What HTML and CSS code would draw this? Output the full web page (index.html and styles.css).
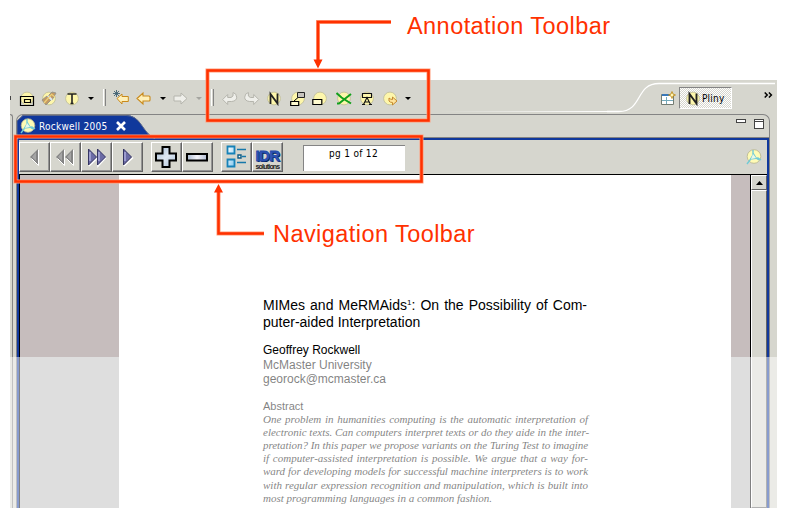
FILE: index.html
```
<!DOCTYPE html>
<html lang="en">
<head>
<meta charset="utf-8">
<title>Pliny toolbars</title>
<link rel="stylesheet" href="styles.css">
</head>
<body>
<svg class="defs" width="0" height="0" aria-hidden="true">
  <defs>
    <linearGradient id="steel" x1="0" y1="0" x2="1" y2="1"><stop offset="0" stop-color="#9fb7d2"/><stop offset=".5" stop-color="#dfe8f2"/><stop offset="1" stop-color="#a9bfd8"/></linearGradient>
    <linearGradient id="bar" x1="0" y1="0" x2="1" y2="0"><stop offset="0" stop-color="#a9b9d0"/><stop offset=".5" stop-color="#f4f4fa"/><stop offset="1" stop-color="#b4bfd4"/></linearGradient>
    <linearGradient id="tile" x1="0" y1="0" x2="1" y2="1"><stop offset="0" stop-color="#fff"/><stop offset="1" stop-color="#84c8ee"/></linearGradient>
    <symbol id="disc" viewBox="0 0 16 16"><circle cx="8" cy="8.500" r="6.400" fill="#fdf6ab" stroke="#bdbb98" stroke-width=".8"/></symbol>
    <symbol id="logo" viewBox="0 0 16 16"><circle cx="8" cy="7.500" r="6.800" fill="#fffbb5" stroke="#b8b58e" stroke-width=".8"/><path d="M7 1v5L4 11 1 15M4 10l8-1 3 2M7 4l3 5 3 2" fill="none" stroke="#72cbd6" stroke-width="1.400"/><path d="M7 5l-2 5 5-1z" fill="#e8f8e8"/></symbol>
  </defs>
</svg>
<div class="stage">
  <main class="window">
    <div class="toolbar">
      <i class="edge"></i>
      <svg class="ic g1" viewBox="0 0 16 16"><use href="#disc"/><path d="M1.500 6.500h13v9h-13zM5.500 9.500h6v3h-6z" fill="none" stroke="#000" stroke-width="1.200"/></svg>
      <svg class="ic g2" viewBox="0 0 16 16"><use href="#disc"/><path d="M1 10l5-4 4 4-5 5zM7 6l4-4 4 1-4 7z" fill="#c49a62" stroke="#98968d"/><path d="M7 6l4 4" stroke="#dceaf5" stroke-width="2"/><path d="M3 13l7-8M10 4l4 3" stroke="#eed179" stroke-width="1.200"/></svg>
      <svg class="ic g3" viewBox="0 0 16 16"><use href="#disc"/><path d="M3.500 4h9M8 4v10M6.500 13.500h3" stroke="#222" stroke-width="1.600"/></svg>
      <i class="drop g4"></i><i class="sep g5"></i>
      <svg class="ic g6" viewBox="0 0 16 16"><path d="M4 8.500l5-4.500v2.500h6.300v5H9V14z" fill="#fff0b8" stroke="#c98a1c"/><path d="M3.500 0v7M0 3.500h7M1 1l5 5M6 1L1 6" stroke="#3f6173" stroke-width=".9"/></svg>
      <svg class="ic g7" viewBox="0 0 16 16"><path d="M1 8.500l6-5.500v3h6q1 0 1 1v3q0 1-1 1H7v3z" fill="#fff0b8" stroke="#c98a1c" stroke-width="1.100"/></svg>
      <i class="drop g8"></i>
      <svg class="ic g9" viewBox="0 0 16 16"><path d="M14 8.500L8 3v3H1v5h7v3z" fill="#efefea" stroke="#b5b5ad"/></svg>
      <i class="drop off g10"></i><i class="sep g11"></i>
      <svg class="ic g12" viewBox="0 0 16 16"><path d="M.7 9.500l5-5v3h3.300q3-.5 2-5 3.700 1 3.700 4.700 0 3.800-5 4.300h-4v3z" fill="#efefea" stroke="#b5b5ad"/></svg>
      <svg class="ic g13" viewBox="0 0 16 16"><path d="M14.700 9.500l-5-5v3H6.400q-3-.5-2-5Q.7 3.500.7 7.200q0 3.800 5 4.300h4v3z" fill="#efefea" stroke="#b5b5ad"/></svg>
      <svg class="ic g14" viewBox="0 0 16 16"><use href="#disc"/><path d="M4.500 14V4l7 9.500V3.500" fill="none" stroke="#222" stroke-width="1.800"/></svg>
      <svg class="ic g15" viewBox="0 0 16 16"><use href="#disc"/><path d="M4 11l4-3.500" stroke="#000"/><path d="M7.500 2.500h7v5h-7z" fill="#c6c3bd" stroke="#222"/><path d="M.7 11.500h8v4h-8z" fill="#fffbd0" stroke="#000" stroke-width="1.200"/></svg>
      <svg class="ic g16" viewBox="0 0 16 16"><use href="#disc"/><path d="M.8 9.500h9v5h-9z" fill="#fffbd0" stroke="#000" stroke-width="1.200"/></svg>
      <svg class="ic g17" viewBox="0 0 16 16"><use href="#disc"/><path d="M.5 3l5 4.500 9.500 6M1 13.500h2L15 4" fill="none" stroke="#12a01b" stroke-width="2"/></svg>
      <svg class="ic g18" viewBox="0 0 16 16"><use href="#disc"/><path d="M3.500 3.500h9v4h-9zM3 14.500h3M10 14.500h3M4.500 14.500L8 7.500l3.500 7M5.500 12h5" fill="none" stroke="#111" stroke-width="1.100"/></svg>
      <svg class="ic g19" viewBox="0 0 16 16"><use href="#disc"/><path d="M7 8v3q1 1.500 3.500 1.500V15l4.500-4-4.500-4v2.500Q8.500 9.500 7 8z" fill="#ffe39a" stroke="#c58a31"/></svg>
      <i class="drop g20"></i>
      <div class="perspective">
        <svg class="swoop" viewBox="0 0 170 34"><path d="M0 31.500H12C36 31.500 28 3.500 52 3.500H168" fill="none" stroke="#fff" stroke-width="1.300"/></svg>
        <div class="switcher">
          <svg class="open" viewBox="0 0 15 15"><path d="M.5 3.500h12v10H.5z" fill="#fff" stroke="#737c72"/><path d="M1 3h8v2H1z" fill="#3978b8"/><path d="M1 9.500h11M5.500 6v7" stroke="#74aabb"/><path d="M11 .5l1 2.500 2.500 1L12 5l-1 2.500L10 5 7.500 4 10 3z" fill="#fff6b3" stroke="#bd8814" stroke-width=".8"/></svg>
          <button class="pliny"><svg viewBox="0 0 16 16"><use href="#disc"/><path d="M4.500 14V4l7 9.500V3.500" fill="none" stroke="#222" stroke-width="1.900"/></svg><span>Pliny</span></button>
          <svg class="more" viewBox="0 0 9 6"><path d="M.7.500L3.200 3 .7 5.500M4.900.500L7.400 3 4.900 5.500" fill="none" stroke="#000" stroke-width="1.500"/></svg>
        </div>
      </div>
    </div>
    <div class="body">
      <div class="neighbor"></div>
      <section class="editor">
        <header class="tabs">
          <div class="tab">
            <svg class="shape" viewBox="0 0 138 24"><path d="M0 24V6L6 0H109C123 0 125 15 134 21L138 24z" fill="#10389c"/><path d="M0 24V6L6 .5H109C123 .5 125 15 134 21L138 24" fill="none" stroke="#5a6688"/></svg>
            <svg class="pic" viewBox="0 0 16 16"><use href="#logo"/></svg>
            <span class="name">Rockwell 2005</span>
            <svg class="close" viewBox="0 0 10 10"><path d="M1 1l8 8M9 1L1 9" stroke="#fff" stroke-width="2.600"/></svg>
          </div>
          <div class="controls"><i class="min"></i><i class="max"></i></div>
        </header>
        <div class="pane">
          <nav class="nav">
            <div class="group">
              <button><svg viewBox="0 0 28 28"><path d="M18 6v16l-8-8z" fill="#848484"/><path d="M18.500 7v15.500l-7-7" fill="none" stroke="#fff"/><path d="M16 9v9l-4-4z" fill="#a5a5a5"/></svg></button>
              <button><svg viewBox="0 0 28 28"><path d="M13 6v16l-8-8zM22 6v16l-8-8z" fill="#848484"/><path d="M13.500 7v15.500l-7-7M22.500 7v15.500l-7-7" fill="none" stroke="#fff"/><path d="M11 9v9l-4-4zM20 9v9l-4-4z" fill="#a5a5a5"/></svg></button>
              <button><svg viewBox="0 0 28 28"><path d="M7 23l9-8.500 0 8.500 8-8.500" fill="none" stroke="#fff" stroke-width="1.500"/><path d="M6.500 6v16l8-8zM15.500 6v16l8-8z" fill="#6b6ba5" stroke="#29295a" stroke-width=".9"/><path d="M8 9v9M17 9v9" stroke="#9c9cce" stroke-width="2"/></svg></button>
              <button><svg viewBox="0 0 28 28"><path d="M11 23l9-8.500" stroke="#fff" stroke-width="1.500"/><path d="M10.500 6v16l8-8z" fill="#6b6ba5" stroke="#29295a" stroke-width=".9"/><path d="M12 9v9" stroke="#9c9cce" stroke-width="2"/></svg></button>
            </div>
            <div class="group second">
              <button><svg viewBox="0 0 28 28"><path d="M10.500 4h7v6.500H24v7h-6.500V24h-7v-6.500H4v-7h6.500z" fill="url(#steel)" stroke="#000" stroke-width="2"/></svg></button>
              <button><svg viewBox="0 0 28 28"><path d="M4 11h20v6.500H4z" fill="url(#bar)" stroke="#000" stroke-width="2"/></svg></button>
            </div>
            <div class="group third">
              <button><svg viewBox="0 0 28 28"><path d="M5.500 3.500h7v7h-7zM5.500 16.500h7v7h-7z" fill="url(#tile)" stroke="#1682b8" stroke-width="1.800"/><path d="M15 6.500h9M15 19.500h9M20 13.500h4" stroke="#1678aa" stroke-width="1.500"/><path d="M16 12h3v3h-3z" fill="#fff" stroke="#0c5b85" stroke-width="1.400"/></svg></button>
              <button class="idr"><b>IDR</b><small>solutions</small></button>
            </div>
            <div class="page-no">pg 1 of 12</div>
            <svg class="brand" viewBox="0 0 16 16"><use href="#logo"/></svg>
          </nav>
          <div class="viewer">
            <article class="page">
              <h1><span class="full">MIMes and MeRMAids<sup>1</sup>: On the Possibility of Com-</span><span class="short">puter-aided Interpretation</span></h1>
              <address><span>Geoffrey Rockwell</span><span>McMaster University</span><span>georock@mcmaster.ca</span></address>
              <h2>Abstract</h2>
              <p><span>One problem in humanities computing is the automatic interpretation of</span><span>electronic texts. Can computers interpret texts or do they aide in the inter-</span><span class="tight">pretation? In this paper we propose variants on the Turing Test to imagine</span><span>if computer-assisted interpretation is possible. We argue that a way for-</span><span class="tight">ward for developing models for successful machine interpreters is to work</span><span>with regular expression recognition and manipulation, which is built into</span><span class="last">most programming languages in a common fashion.</span></p>
            </article>
            <div class="scroll"><div class="up"><svg viewBox="0 0 7 4"><path d="M3.500 0L7 4H0z"/></svg></div><div class="thumb"></div></div>
          </div>
        </div>
      </section>
    </div>
    <div class="fade"></div>
  </main>
  <svg class="marks" viewBox="0 0 786 518">
    <g fill="none" stroke="#ff9c7b" stroke-width="4"><path d="M207.500 70.500h221v50h-221zM15.500 136.500h406v45h-406zM391 22H318V62M264 233.500H218.500V190"/></g>
    <g fill="none" stroke="#ff3100" stroke-width="2.500"><path d="M207.500 70.500h221v50h-221zM15.500 136.500h406v45h-406zM391 22H318V62M264 233.500H218.500V190"/></g>
    <path d="M313.500 59.500h9L318 68.500zM214 192.500h9L218.500 184z" fill="#ff3100"/>
  </svg>
  <div class="label annotation">Annotation Toolbar</div>
  <div class="label navigation">Navigation Toolbar</div>
</div>
</body>
</html>
```
FILE: styles.css
```
* { box-sizing: border-box; }
body { margin: 0; background: #fff; font-family: "Liberation Sans", Arial, sans-serif; }
.defs { position: absolute; }
svg { display: block; flex: none; }
.stage { position: relative; width: 786px; height: 518px; padding: 80px 0 0 10px; overflow: hidden; }
.window { position: relative; width: 767px; height: 428px; background: #d6d6ce; display: flex; flex-direction: column; overflow: hidden; }
.toolbar { height: 34px; flex: none; display: flex; padding-top: 10px; }
.ic { width: 16px; height: 16px; }
.edge { width: 1px; height: 4px; background: #444; margin-top: 6px; }
.drop { width: 6px; height: 3px; margin-top: 7px; background: #000; clip-path: polygon(0 0, 100% 0, 50% 100%); flex: none; }
.drop.off { background: #a5a5a0; }
.sep { width: 3px; height: 17px; margin-top: -1px; flex: none; border-left: 1px solid #fff; border-right: 1px solid #848484; background: #d6d6ce; }
.g1 { margin-left: 8px; }
.g2 { margin-left: 6px; }
.g3 { margin-left: 7px; }
.g4 { margin-left: 8px; }
.g5 { margin-left: 9px; }
.g6 { margin-left: 7px; }
.g7 { margin-left: 7px; }
.g8 { margin-left: 8px; }
.g9 { margin-left: 7px; }
.g10 { margin-left: 7px; }
.g11 { margin-left: 9px; }
.g12 { margin-left: 8px; }
.g13 { margin-left: 6px; }
.g14 { margin-left: 6px; }
.g15 { margin-left: 8px; }
.g16 { margin-left: 6px; }
.g17 { margin-left: 8px; }
.g18 { margin-left: 7px; }
.g19 { margin-left: 7px; }
.g20 { margin-left: 7px; }
.perspective { position: relative; width: 170px; height: 34px; margin: -10px 0 0 auto; flex: none; }
.perspective::before { content: ""; position: absolute; left: -166px; top: 31px; width: 167px; height: 1px; background: linear-gradient(90deg, #d6d6ce, #fff); }
.swoop { position: absolute; left: 0; top: 0; width: 170px; height: 34px; }
.switcher { position: relative; display: flex; padding: 7px 4px 0 54px; align-items: flex-start; }
.open { width: 15px; height: 15px; margin-top: 4px; }
.pliny { width: 53px; height: 22px; margin-left: 3px; padding: 0 0 0 5px; display: flex; align-items: center; border: 1px solid; border-color: #848484 #fff #fff #848484; background: repeating-conic-gradient(#d6d6ce 0 25%, #fff 0 50%) 0 0 / 2px 2px; }
.pliny svg { width: 16px; height: 16px; }
.pliny span { font: 10px/14px "DejaVu Sans Condensed", "DejaVu Sans", sans-serif; letter-spacing: .2px; color: #000; margin: 2px 0 0 1px; }
.more { width: 9px; height: 6px; margin: 5px 0 0 auto; }
.body { flex: 1; display: flex; min-height: 0; }
.neighbor { width: 3px; border-top: 1px solid #848484; border-right: 1px solid #848484; border-top-right-radius: 3px; }
.editor { width: 754px; margin-left: 3px; border: 1px solid #848484; border-bottom: 0; border-radius: 7px 7px 0 0; display: flex; flex-direction: column; }
.tabs { height: 23px; flex: none; display: flex; justify-content: space-between; border-bottom: 1px solid #848484; }
.tab { position: relative; width: 138px; height: 24px; display: flex; color: #fff; font: 10px/14px "DejaVu Sans Condensed", "DejaVu Sans", sans-serif; letter-spacing: .25px; }
.shape { position: absolute; left: 0; top: 0; width: 138px; height: 24px; }
.pic { position: relative; width: 16px; height: 16px; margin: 3px 0 0 3px; }
.name { position: relative; width: 70px; margin: 5px 0 0 3px; white-space: nowrap; }
.close { position: relative; width: 10px; height: 10px; margin: 6px 0 0 7px; }
.controls { display: flex; gap: 8px; padding: 4px 5px 0 0; }
.min { width: 10px; height: 4px; border: 1px solid #444; background: #fff; }
.max { width: 10px; height: 10px; border: 1px solid #444; background: linear-gradient(#fff 1px, #444 1px 2px, #fff 2px); }
.pane { flex: 1; min-height: 0; border: 2px solid #10389c; border-bottom: 0; display: flex; flex-direction: column; }
.nav { height: 34px; flex: none; display: flex; padding: 2px 5px 0 0; }
.group { display: flex; }
.group button { width: 31px; height: 30px; padding: 0; border: 1px solid; border-color: #fff #636363 #636363 #fff; box-shadow: inset -1px -1px #949494; background: #d6d6ce; }
.group svg { width: 28px; height: 28px; }
.second, .third { margin-left: 8px; }
.group .idr { display: flex; flex-direction: column; align-items: center; justify-content: flex-start; }
.idr b { font: 900 15px/15px "Liberation Sans", sans-serif; color: #3157b5; text-shadow: 1px 1px #001a52; padding-top: 5px; letter-spacing: -.6px; -webkit-text-stroke: .8px #2148a8; }
.idr small { font: bold 7px/7px "Liberation Sans", sans-serif; color: #222; letter-spacing: -.8px; }
.page-no { width: 102px; height: 26px; margin: 3px 0 0 20px; border-top: 1px solid #848484; border-left: 1px solid #848484; background: #fff; font: 10px/15px "DejaVu Sans Condensed", "DejaVu Sans", sans-serif; letter-spacing: .3px; text-align: center; padding-right: 2px; }
.brand { width: 16px; height: 16px; margin: 7px 0 0 auto; }
.viewer { flex: 1; min-height: 0; display: flex; border: 1px solid #000; border-width: 1px 0 0 1px; background: linear-gradient(#c6bdbd 182px, #bdbdbd 182px); }
.page { width: 612px; margin-left: 99px; padding: 122px 0 0 144px; background: #fff; color: #000; }
.page span { display: block; white-space: nowrap; }
h1 { margin: 0; width: 324px; font-weight: 400; font-size: 14px; line-height: 17px; }
h1 sup { font-size: 8px; line-height: 0; vertical-align: 5px; }
.full, p span { text-align: justify; text-align-last: justify; }
address { margin-top: 12px; font-style: normal; font-size: 12px; line-height: 14.5px; }
h2 { margin: 13px 0 0; font-weight: 400; font-size: 11px; line-height: 13px; }
p { margin: 0; width: 325px; font: italic 11px/13.2px "Liberation Serif", serif; }
p .tight { letter-spacing: -.05px; }
p .last { text-align-last: left; }
.scroll { margin-left: 19px; width: 17px; border-left: 1px solid #000; background: #d6d6ce; display: flex; flex-direction: column; }
.up { height: 15px; border: 1px solid; border-color: #fff #636363 #636363 #fff; display: flex; align-items: center; justify-content: center; }
.up svg { width: 7px; height: 4px; }
.thumb { flex: 1; border: 1px solid; border-color: #fff #636363 #636363 #fff; }
.fade { position: absolute; left: 0; right: 0; top: 277px; bottom: 0; background: rgba(255, 255, 255, .5); }
.marks { position: absolute; left: 0; top: 0; width: 786px; height: 518px; }
.label { position: absolute; font-size: 23.5px; line-height: 28px; letter-spacing: .44px; color: #ff3100; white-space: nowrap; }
.annotation { left: 407px; top: 12px; }
.navigation { left: 273px; top: 220px; }
```
